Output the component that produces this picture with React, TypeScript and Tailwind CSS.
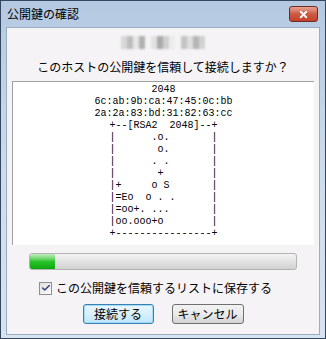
import { Check, X } from 'lucide-react'

const jp = { fontFamily: '"Noto Sans CJK JP", "Noto Sans", sans-serif' }

const art = [
  '2048',
  '6c:ab:9b:ca:47:45:0c:bb',
  '2a:2a:83:bd:31:82:63:cc',
  '+--[RSA2  2048]--+',
  '|      .o.       |',
  '|       o.       |',
  '|      . .       |',
  '|       +        |',
  '|+     o S       |',
  '|=Eo  o . .      |',
  '|=oo+. ...       |',
  '|oo.ooo+o        |',
  '+----------------+',
]

// pixelated host name
const mosaic = [
  '#d8d8d8', '#bdbdbd', '#e6e6e6', '#b0b0b0', '#c9c9c9', '#e2e2e2', '#a9a9a9',
  '#cfcfcf', '#ececec', '#bababa', '#c4c4c4', '#dedede', '#b5b5b5', '#d2d2d2',
]

export default function App() {
  return (
    <div className="h-[339px] w-[326px] bg-[#34475e] p-px" style={jp}>
      <div className="flex h-full flex-col bg-gradient-to-b from-[#b4c9e1] via-[#cddcec] to-[#d7e3f0]">
        {/* title bar */}
        <div className="flex h-[26px] shrink-0 items-center justify-between pl-[6px] pr-[7px]">
          <span className="text-[12px] leading-none text-black">公開鍵の確認</span>
          <div className="flex h-[16px] w-[29px] items-center justify-center rounded-[3px] border border-[#6d2b22] bg-gradient-to-b from-[#e8a493] via-[#cc5a42] to-[#c7402a]">
            <X size={11} strokeWidth={4} className="text-white" />
          </div>
        </div>

        {/* client */}
        <div className="mx-[5px] mb-[3px] flex flex-1 flex-col border border-[#9aacc2] bg-[#f6f3f6]">
          <div className="mt-[8px] flex h-[13px] justify-center blur-[1px]">
            {mosaic.map((c, i) => (
              <div
                key={i}
                className="h-[13px] w-[6px]"
                style={{ backgroundColor: i === 4 || i === 9 ? '#f6f3f6' : c }}
              />
            ))}
          </div>

          <div className="mt-[11px] text-center text-[12px] leading-[14px] text-black">
            このホストの公開鍵を信頼して接続しますか？
          </div>

          <div className="mx-[5px] mt-[7px] h-[164px] border-t border-l border-[#a0a0a0] border-r-white border-b-white bg-white pt-[2px]">
            <pre className="text-center font-['Liberation_Mono',monospace] text-[10px] leading-[12px] text-black">
              {art.join('\n')}
            </pre>
          </div>

          <div className="mx-[22px] mt-[8px] h-[17px] overflow-hidden rounded-[3px] border border-[#b2b2b2] bg-gradient-to-b from-[#f3f3f3] via-[#e2e2e2] to-[#d2d2d2]">
            <div className="h-full w-[25px] bg-gradient-to-b from-[#bfeebf] via-[#27c42b] to-[#0ea70f]" />
          </div>

          <div className="ml-[32px] mt-[11px] flex items-center gap-[4px]">
            <div className="flex h-[13px] w-[13px] items-center justify-center border border-[#8f8f8f] bg-gradient-to-br from-[#e0e0e0] to-[#fbfbfb]">
              <Check size={10} strokeWidth={3.5} className="text-[#2f4279]" />
            </div>
            <span className="text-[12px] leading-[14px] text-black">この公開鍵を信頼するリストに保存する</span>
          </div>

          <div className="mt-[9px] flex justify-center gap-[18px]">
            <button className="flex h-[20px] w-[71px] items-center justify-center rounded-[3px] border border-[#3c7fb1] bg-gradient-to-b from-[#eaf6fd] via-[#d9f0fc] to-[#bee6fd] text-[12px] leading-none text-black shadow-[inset_0_0_0_1px_#9fdcf7]">
              接続する
            </button>
            <button className="flex h-[20px] w-[72px] items-center justify-center rounded-[3px] border border-[#707070] bg-gradient-to-b from-[#f2f2f2] via-[#ebebeb] to-[#d2d2d2] text-[12px] leading-none text-black">
              キャンセル
            </button>
          </div>
        </div>
      </div>
    </div>
  )
}
